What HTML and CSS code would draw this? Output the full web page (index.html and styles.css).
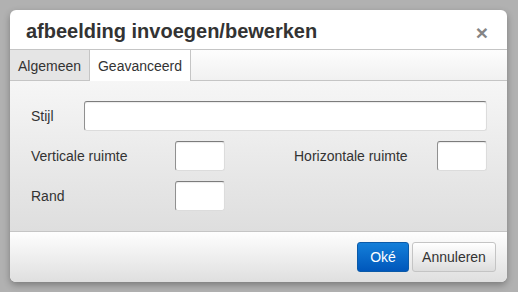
FILE: index.html
```html
<!DOCTYPE html>
<html lang="nl">
<head>
<meta charset="utf-8">
<title>afbeelding invoegen/bewerken</title>
<link rel="stylesheet" href="styles.css">
</head>
<body>
<div class="dialog">
  <div class="head">
    <div class="title">afbeelding invoegen/bewerken</div>
    <button class="close" type="button">×</button>
  </div>
  <div class="tabs">
    <div class="tab">Algemeen</div>
    <div class="tab active">Geavanceerd</div>
  </div>
  <div class="body">
    <div class="row">
      <label class="lbl lbl-short">Stijl</label>
      <input class="field wide" type="text">
    </div>
    <div class="row">
      <label class="lbl lbl-long">Verticale ruimte</label>
      <input class="field small" type="text">
      <label class="lbl lbl-right">Horizontale ruimte</label>
      <input class="field small" type="text">
    </div>
    <div class="row">
      <label class="lbl lbl-long">Rand</label>
      <input class="field small" type="text">
    </div>
  </div>
  <div class="foot">
    <button class="btn primary" type="button">Oké</button>
    <button class="btn" type="button">Annuleren</button>
  </div>
</div>
</body>
</html>
```
FILE: styles.css
```css
html, body {
  margin: 0;
  padding: 0;
  background: #b1b1b1;
  width: 518px;
  height: 292px;
  overflow: hidden;
}
body {
  padding: 10px 0 0 10px;
  box-sizing: border-box;
  font-family: "Liberation Sans", Arial, sans-serif;
  font-size: 14px;
  color: #333;
}
.dialog {
  width: 497px;
  height: 272px;
  background: #fff;
  border-radius: 6px;
  box-shadow: 0 3px 7px rgba(0,0,0,0.3);
  overflow: hidden;
  display: flex;
  flex-direction: column;
  box-sizing: border-box;
}
.head {
  height: 40px;
  flex: none;
  box-sizing: border-box;
  border-bottom: 1px solid #c5c5c5;
  display: flex;
  align-items: center;
  padding: 2px 0 0 16px;
}
.title {
  flex: 1;
  font-size: 20px;
  font-weight: bold;
  color: #333;
  line-height: 24px;
}
.close {
  border: 0;
  background: none;
  padding: 0;
  margin: 4px 18px 0 0;
  font-family: "Liberation Sans", Arial, sans-serif;
  font-size: 21px;
  font-weight: bold;
  color: #858585;
  line-height: 20px;
  width: 14px;
}
.tabs {
  height: 31px;
  flex: none;
  box-sizing: border-box;
  border-bottom: 1px solid #c5c5c5;
  background: linear-gradient(#fdfdfd, #f1f1f1);
  display: flex;
}
.tab {
  width: 80px;
  text-align: center;
  background: #e5e5e5;
  border-right: 1px solid #c5c5c5;
  padding-top: 2px;
  box-sizing: border-box;
  height: 30px;
  line-height: 28px;
  white-space: nowrap;
}
.tab.active {
  width: 101px;
  background: #fff;
  height: 31px;
  margin-bottom: -1px;
}
.body {
  flex: none;
  height: 150px;
  box-sizing: border-box;
  padding: 20px 20px;
  background: linear-gradient(#f6f6f6, #dedede);
  display: flex;
  flex-direction: column;
  gap: 10px;
}
.row {
  display: flex;
  align-items: center;
  height: 30px;
}
.lbl {
  flex: none;
  padding-left: 1px;
  box-sizing: border-box;
}
.lbl-short { width: 54px; }
.lbl-long { width: 145px; }
.lbl-right { width: 144px; margin-left: auto; }
.field {
  height: 30px;
  box-sizing: border-box;
  border: 1px solid #dcdcdc;
  border-top-color: #7c7c7c;
  border-left-color: #909090;
  border-radius: 3px;
  background: #fff;
  margin: 0;
  padding: 0 4px;
  font: inherit;
  box-shadow: inset 0 1px 1px rgba(0,0,0,0.08);
}
.wide { flex: 1; }
.small { width: 50px; flex: none; }
.foot {
  flex: 1;
  border-top: 1px solid #c5c5c5;
  background: linear-gradient(#fefefe, #dfdfdf);
  display: flex;
  justify-content: flex-end;
  align-items: flex-start;
  gap: 3px;
  padding: 10px 11px 0 0;
}
.btn {
  height: 30px;
  box-sizing: border-box;
  border: 1px solid #c4c4c4;
  border-radius: 3px;
  background: linear-gradient(#ffffff, #dddddd);
  font-family: "Liberation Sans", Arial, sans-serif;
  font-size: 14px;
  color: #333;
  padding: 0 4px;
  margin: 0;
  width: 84px;
}
.btn.primary {
  width: 52px;
  color: #fff;
  border-color: #0b5aa8;
  background: linear-gradient(#147fd9, #0057bb);
}
```
